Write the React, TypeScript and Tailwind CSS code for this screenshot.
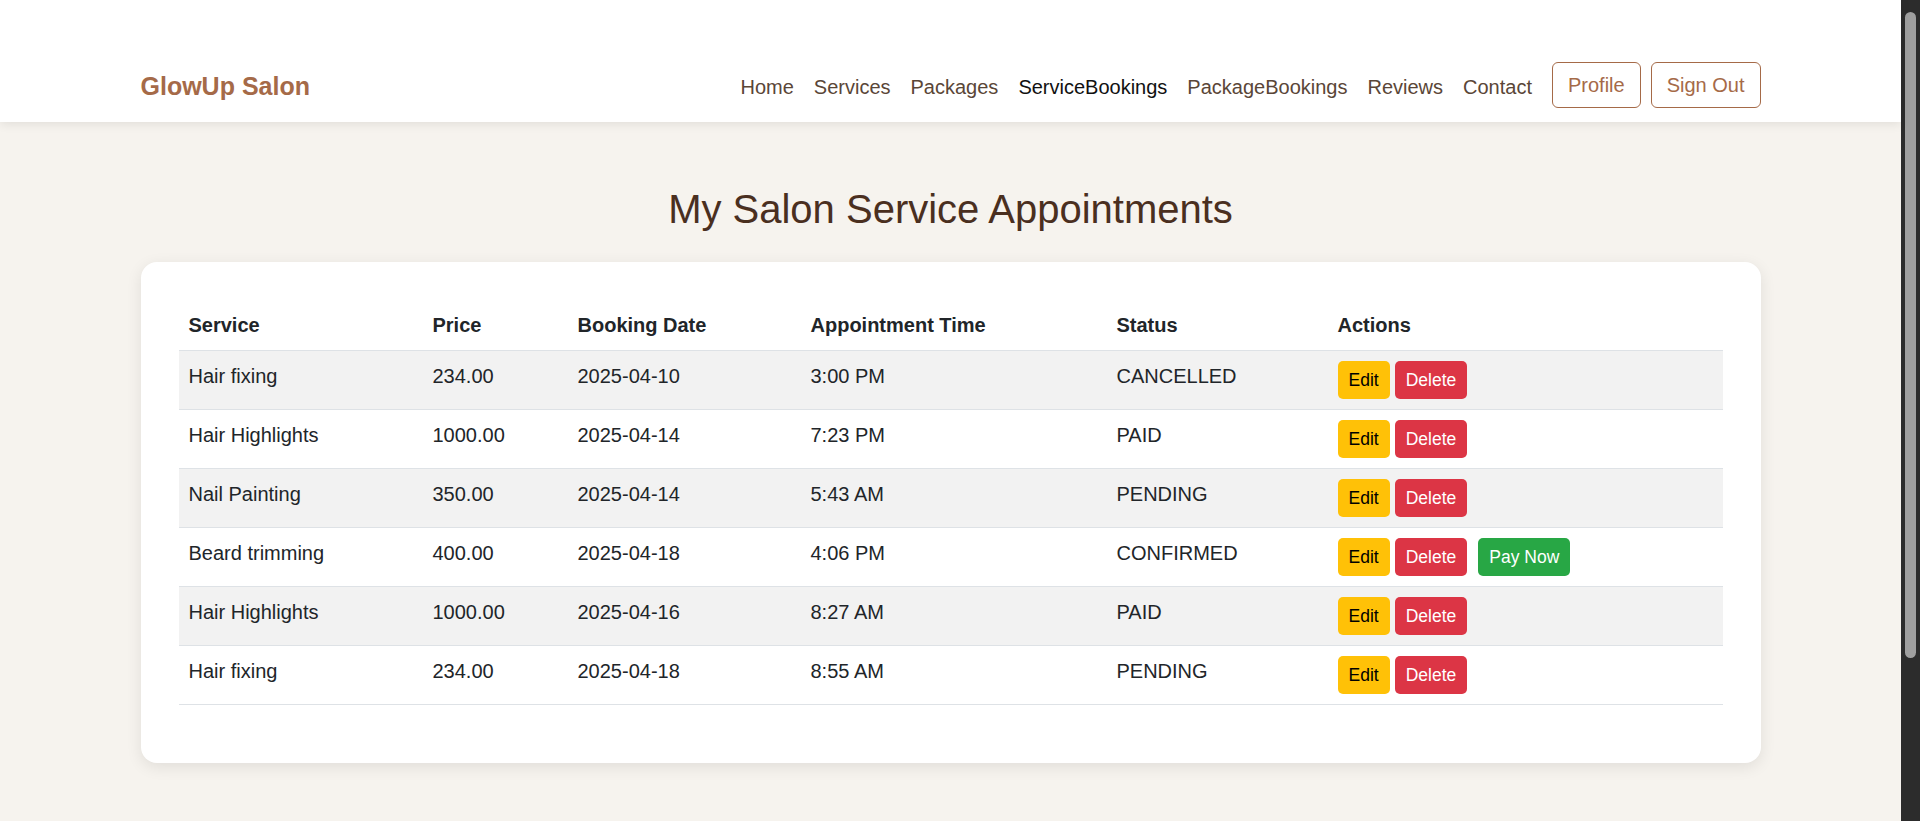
import React from 'react'

type Booking = {
  service: string
  price: string
  date: string
  time: string
  status: string
}

const bookings: Booking[] = [
  { service: 'Hair fixing', price: '234.00', date: '2025-04-10', time: '3:00 PM', status: 'CANCELLED' },
  { service: 'Hair Highlights', price: '1000.00', date: '2025-04-14', time: '7:23 PM', status: 'PAID' },
  { service: 'Nail Painting', price: '350.00', date: '2025-04-14', time: '5:43 AM', status: 'PENDING' },
  { service: 'Beard trimming', price: '400.00', date: '2025-04-18', time: '4:06 PM', status: 'CONFIRMED' },
  { service: 'Hair Highlights', price: '1000.00', date: '2025-04-16', time: '8:27 AM', status: 'PAID' },
  { service: 'Hair fixing', price: '234.00', date: '2025-04-18', time: '8:55 AM', status: 'PENDING' }
]

const navLinks = ['Home', 'Services', 'Packages', 'ServiceBookings', 'PackageBookings', 'Reviews', 'Contact']

const Navbar = () => (
  <header className="h-[122px] bg-white shadow-[0_2px_10px_rgba(0,0,0,0.09)] relative z-10">
    <div className="w-[1620px] mx-auto pt-[62px]">
      <div className="flex items-center justify-between h-[46px]">
        <a className="text-[25px] leading-[38px] font-bold text-[#a56a48] translate-y-[1px]">GlowUp Salon</a>
        <nav className="flex items-center gap-5">
          {navLinks.map((link) => (
            <a
              key={link}
              className={`text-[20px] leading-[30px] translate-y-[2px] ${
                link === 'ServiceBookings' ? 'text-[#111111]' : 'text-[#5a4637]'
              }`}
            >
              {link}
            </a>
          ))}
          <div className="flex items-center gap-[10px]">
            <button className="h-[46px] px-[15px] border border-[#a56a48] rounded-[6px] text-[20px] leading-[30px] text-[#a56a48] bg-white">
              Profile
            </button>
            <button className="h-[46px] px-[15px] border border-[#a56a48] rounded-[6px] text-[20px] leading-[30px] text-[#a56a48] bg-white">
              Sign Out
            </button>
          </div>
        </nav>
      </div>
    </div>
  </header>
)

const cellBase = 'px-[10px] py-[10px] align-top leading-[30px] border-b border-[#dee2e6] text-left'

const BookingsTable = () => (
  <table className="w-full table-fixed border-collapse mb-5 text-[20px] text-[#212529]">
    <colgroup>
      <col className="w-[244px]" />
      <col className="w-[145px]" />
      <col className="w-[233px]" />
      <col className="w-[306px]" />
      <col className="w-[221px]" />
      <col />
    </colgroup>
    <thead>
      <tr>
        {['Service', 'Price', 'Booking Date', 'Appointment Time', 'Status', 'Actions'].map((h) => (
          <th key={h} className={`${cellBase} font-bold`}>
            {h}
          </th>
        ))}
      </tr>
    </thead>
    <tbody>
      {bookings.map((b, i) => (
        <tr key={i} className={i % 2 === 0 ? 'bg-[#f2f2f2]' : 'bg-white'}>
          <td className={cellBase}>{b.service}</td>
          <td className={cellBase}>{b.price}</td>
          <td className={cellBase}>{b.date}</td>
          <td className={cellBase}>{b.time}</td>
          <td className={cellBase}>{b.status}</td>
          <td className={cellBase}>
            <div className="flex items-start">
              <button className="h-[38px] px-[11px] rounded-[5px] bg-[#ffc107] text-black text-[17.5px] leading-[26px] mr-[5px]">
                Edit
              </button>
              <button className="h-[38px] px-[11px] rounded-[5px] bg-[#dc3545] text-white text-[17.5px] leading-[26px]">
                Delete
              </button>
              {b.status === 'CONFIRMED' && (
                <button className="h-[38px] px-[11px] rounded-[5px] bg-[#28a745] text-white text-[17.5px] leading-[26px] ml-[11px]">
                  Pay Now
                </button>
              )}
            </div>
          </td>
        </tr>
      ))}
    </tbody>
  </table>
)

// window scrollbar as seen in the screenshot
const Scrollbar = () => (
  <div className="w-[19px] shrink-0 bg-[#2c2c2c] flex flex-col items-center">
    <div className="mt-[12px] h-[646px] w-[11px] rounded-full bg-[#9f9f9f]" />
  </div>
)

export default function App() {
  return (
    <div className="flex h-screen overflow-hidden bg-[#f6f3ee] font-['Liberation_Sans',Arial,sans-serif]">
      <div className="flex-1 min-w-0">
        <Navbar />
        <main className="w-[1620px] mx-auto">
          <h1 className="mt-[63px] mb-[29px] text-center text-[40px] leading-[48px] text-[#4a2f1f]">
            My Salon Service Appointments
          </h1>
          <div className="bg-white rounded-2xl p-[38px] shadow-[0_4px_16px_rgba(0,0,0,0.09)]">
            <BookingsTable />
          </div>
        </main>
      </div>
      <Scrollbar />
    </div>
  )
}
